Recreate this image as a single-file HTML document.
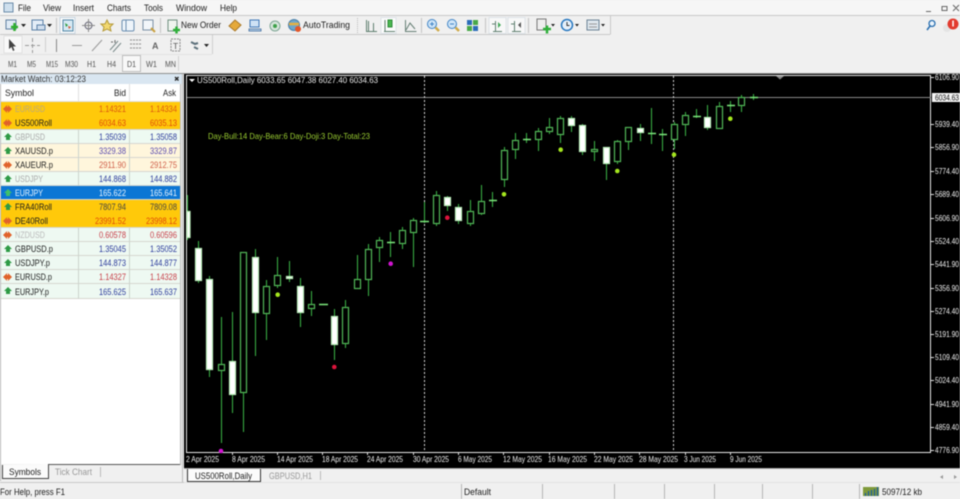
<!DOCTYPE html>
<html><head><meta charset="utf-8"><title>MT</title>
<style>
html,body{margin:0;padding:0;background:#f0f0f0;width:960px;height:499px;overflow:hidden}
svg{display:block;filter:blur(.4px)}
text{font-family:"Liberation Sans",sans-serif;font-size:9.6px;fill:#1c1c1c}
.g,g.g text{fill:#555;font-size:8.4px}
.r text{font-size:9.6px}
.ax text{fill:#f0f0f0;font-size:8.2px}
.h{fill:#fff;stroke:#b8ecb8;stroke-width:1.2}
.o{fill:#000;stroke:#52b858;stroke-width:1.2}
.ic{fill:none;stroke:#667;stroke-width:1}
</style></head><body>
<svg width="960" height="499" viewBox="0 0 960 499" xmlns="http://www.w3.org/2000/svg">
<rect width="960" height="499" fill="#f0f0f0"/>
<rect width="960" height="15" fill="#f6f6f6"/>
<path d="M0 15.5H960" stroke="#c8c8c8"/>
<!-- menu -->
<g>
<rect x="4" y="3" width="9" height="9" fill="#cfe0ee" stroke="#6a8aa8"/>
<text x="18" y="11" textLength="13" lengthAdjust="spacingAndGlyphs">File</text>
<text x="43" y="11" textLength="18" lengthAdjust="spacingAndGlyphs">View</text>
<text x="73" y="11" textLength="21" lengthAdjust="spacingAndGlyphs">Insert</text>
<text x="107" y="11" textLength="24" lengthAdjust="spacingAndGlyphs">Charts</text>
<text x="144" y="11" textLength="19" lengthAdjust="spacingAndGlyphs">Tools</text>
<text x="176" y="11" textLength="31" lengthAdjust="spacingAndGlyphs">Window</text>
<text x="220" y="11" textLength="17" lengthAdjust="spacingAndGlyphs">Help</text>
<path d="M926 11.500h5M942 6.500h5v4h-5zM953 5l6 6M959 5l-6 6" stroke="#666" fill="none"/>
</g>
<!-- toolbar 1 -->
<path d="M610.500 16V34.500M0 34.500H610" stroke="#c8c8c8" fill="none"/>
<path d="M56.500 18v15M160.500 18v15M421.500 18v15M485.500 18v15M528.500 18v15" stroke="#c4c4c4"/>
<rect x="6" y="20" width="10" height="9" fill="#dfeaf5" stroke="#5f7fa0"/><path d="M11 27h7M14.500 23v8" stroke="#2fae2f" stroke-width="2.500"/>
<path d="M21 24h5l-2.500 3z" fill="#222"/>
<rect x="32" y="20" width="11" height="10" fill="#e3edf7" stroke="#5a7fa6"/><path d="M37 25h8v5h-8z" fill="#cfdded" stroke="#5a7fa6"/>
<path d="M47 24h5l-2.500 3z" fill="#222"/>
<rect x="60" y="17.500" width="15" height="16" fill="#fbfbfb" stroke="#c6d4e0"/>
<rect x="63" y="20" width="10" height="11" fill="#d6e9f3" stroke="#4f86a6"/><path d="M65 23l3 2-2 2z" fill="#2a9a3a"/><path d="M68 26l3 1-2 2z" fill="#d5502a"/>
<circle cx="88.500" cy="25.500" r="3.500" class="ic"/><path d="M88.500 19v13M82 25.500h13" stroke="#8a8a8a"/>
<path d="M107 20l2 4 4 0-3 3 1 4-4-2-4 2 1-4-3-3 4 0z" fill="#f2d870" stroke="#b59a3a"/>
<rect x="122" y="20" width="12" height="11" rx="1.500" fill="#eef4fa" stroke="#6a8eb0"/><path d="M126 20v11" stroke="#6a8eb0"/>
<rect x="143" y="20" width="10" height="10" fill="#f2f6fa" stroke="#7a90a6"/><path d="M151 28l4 4" stroke="#c9a040" stroke-width="2"/>
<rect x="168" y="20" width="9" height="11" fill="#f0f5ef" stroke="#6f8f7f"/><path d="M173 30h7M176.500 26.500v7" stroke="#2faf3a" stroke-width="2.500"/>
<text x="181" y="28" textLength="40" lengthAdjust="spacingAndGlyphs">New Order</text>
<path d="M229 26l6-6 6 5-6 6z" fill="#e5a93a" stroke="#a8782a"/>
<rect x="250" y="20" width="9" height="7" fill="#cfe2f5" stroke="#3f78b8"/><path d="M249 29h12v2h-12z" fill="#bcd2ea" stroke="#5a82ad"/>
<circle cx="275" cy="26" r="5" fill="#d7e6dc" stroke="#7ea595"/><circle cx="275" cy="26" r="2" fill="#3da04a"/>
<circle cx="294" cy="25" r="5.500" fill="#6ea6cc" stroke="#4a7fa8"/><path d="M289 24h10" stroke="#e6b040" stroke-width="2.500"/><circle cx="298" cy="29" r="3" fill="#e2572a"/>
<text x="303" y="28" textLength="47" lengthAdjust="spacingAndGlyphs">AutoTrading</text>
<path d="M357.500 18v15" stroke="#bdbdbd" stroke-dasharray="1 1"/>
<path d="M366 31.500h11M368.500 21v10M373.500 23v8M366.500 31V20" stroke="#5f7f6f" fill="none"/>
<rect x="381" y="17.500" width="15" height="16" fill="#fbfbfb" stroke="#dde3e8"/>
<path d="M384 31.500h11M385 20v11" stroke="#5f7f6f"/><rect x="388" y="20" width="4" height="7" fill="#49b84f" stroke="#2f8a3a"/>
<path d="M405.500 20v11.500h11M406 30l4-7 5 6" stroke="#667f75" fill="none"/>
<circle cx="432" cy="24" r="4.500" fill="#cfe5f8" stroke="#3f83c5"/><path d="M430 24h4M432 22v4" stroke="#3f83c5"/><path d="M435.500 27.500l3.500 3.500" stroke="#cfaa4a" stroke-width="2.500"/>
<circle cx="452" cy="24" r="4.500" fill="#cfe5f8" stroke="#3f83c5"/><path d="M450 24h4" stroke="#3f83c5"/><path d="M455.500 27.500l3.500 3.500" stroke="#cfaa4a" stroke-width="2.500"/>
<rect x="467" y="20" width="5" height="5" fill="#2b6cb8"/><rect x="473" y="20" width="5" height="5" fill="#48a848"/><rect x="467" y="26" width="5" height="5" fill="#48a848"/><rect x="473" y="26" width="5" height="5" fill="#2b6cb8"/>
<path d="M492.500 18v15" stroke="#cfcfcf" stroke-width="2"/>
<rect x="489" y="17.500" width="17" height="16" fill="#f8f8f8" stroke="#dde3e8"/>
<rect x="508" y="17.500" width="17" height="16" fill="#f8f8f8" stroke="#dde3e8"/>
<path d="M493 31.500h9M495.500 21v10M492 24h3" stroke="#5f7f6f" fill="none"/><path d="M498 22l3 3-3 3z" fill="#45a95a"/>
<path d="M512 31.500h9M514.500 21v10M511 24h3" stroke="#5f7f6f" fill="none"/><path d="M521 22l-3 3 3 3z" fill="#555"/>
<rect x="537" y="19" width="9" height="11" fill="#eee" stroke="#777"/><path d="M543 29h8M547 25.500v8" stroke="#2faf3a" stroke-width="2.500"/>
<path d="M551 24h4l-2 2.500z" fill="#222"/>
<circle cx="567" cy="25" r="5.500" fill="#e6f0fa" stroke="#2878c0" stroke-width="1.500"/><path d="M567 22v3.500h2.500" stroke="#333" fill="none"/>
<path d="M575 24h4l-2 2.500z" fill="#222"/>
<rect x="587" y="20" width="12" height="10" fill="#dfe7ee" stroke="#6b8294"/><path d="M589 24h8M589 27h8" stroke="#999"/>
<path d="M601 24h4l-2 2.500z" fill="#222"/>
<!-- right icons -->
<circle cx="932" cy="23.500" r="3" fill="#eaf3fb" stroke="#2a6fb0" stroke-width="1.300"/><path d="M930 26l-3 4" stroke="#2a6fb0" stroke-width="1.600"/>
<circle cx="947" cy="28" r="4" fill="#e4e4e4"/>
<circle cx="953" cy="24" r="5.500" fill="#e23a2e"/><rect x="952.300" y="20.500" width="1.500" height="6" fill="#fff"/>
<!-- toolbar 2 -->
<path d="M212.500 35v19M45.500 37v15" stroke="#cfcfcf" fill="none"/>
<path d="M0 54.500H212" stroke="#e2e2e2"/>
<rect x="4" y="36" width="18" height="17" fill="#f9f9f9" stroke="#e0e0e0"/>
<path d="M9 39v10l2.500-2 1.500 4 1.500-.7-1.500-3.800h3z" fill="#444"/>
<path d="M32.500 38v15M25 45.500h15" stroke="#999" stroke-dasharray="4 2"/>
<path d="M56.500 39v13" stroke="#888"/><path d="M72 45.500h10" stroke="#999"/><path d="M92 51l10-11" stroke="#999"/>
<path d="M110 50l8-9M113 52l8-9" stroke="#7a8a8a"/><path d="M111 42h2M115 40v3" stroke="#666"/>
<path d="M130 40h11M130 44h11M130 48h11" stroke="#8b8b8b" stroke-dasharray="2 1"/>
<text x="152" y="49" font-weight="bold" style="font-size:9px;fill:#666">A</text>
<rect x="171" y="39" width="9" height="12" fill="none" stroke="#888" stroke-dasharray="2 1"/><text x="173" y="49" style="font-size:8.500px;fill:#555">T</text>
<path d="M191 42l4 2 3-1M194 47l4 2" stroke="#5b6f7a" stroke-width="2" fill="none"/><path d="M204 44h5l-2.500 3z" fill="#222"/>
<!-- toolbar 3 -->
<path d="M178.500 56v15" stroke="#d2d2d2" fill="none"/>
<rect x="122.500" y="55.500" width="18" height="16" fill="#f8f8f8" stroke="#bdbdbd"/>
<g class="g">
<text x="8" y="67" textLength="9" lengthAdjust="spacingAndGlyphs">M1</text>
<text x="27" y="67" textLength="9" lengthAdjust="spacingAndGlyphs">M5</text>
<text x="46" y="67" textLength="12" lengthAdjust="spacingAndGlyphs">M15</text>
<text x="65" y="67" textLength="13" lengthAdjust="spacingAndGlyphs">M30</text>
<text x="87" y="67" textLength="9" lengthAdjust="spacingAndGlyphs">H1</text>
<text x="107" y="67" textLength="9" lengthAdjust="spacingAndGlyphs">H4</text>
<text x="127" y="67" textLength="9" lengthAdjust="spacingAndGlyphs">D1</text>
<text x="146" y="67" textLength="11" lengthAdjust="spacingAndGlyphs">W1</text>
<text x="165" y="67" textLength="11" lengthAdjust="spacingAndGlyphs">MN</text>
</g>
<path d="M0 73.500H960" stroke="#8f8f8f"/>
<!-- market watch -->
<rect x="0" y="74" width="182" height="10" fill="#d9e6f1"/>
<text x="1" y="82" textLength="85" lengthAdjust="spacingAndGlyphs" style="font-size:9px;fill:#333">Market Watch: 03:12:23</text>
<path d="M175 77l3.500 3.500M178.500 77l-3.500 3.500" stroke="#222" stroke-width="1.300"/>
<rect x="1" y="84" width="179" height="380" fill="#fff"/>
<path d="M0.500 84v397M180.500 84v381M182.500 74v408" stroke="#bbb" fill="none"/>
<path d="M78.500 84v215M129.500 84v215M1 101.500H180" stroke="#e0e0e0"/>
<text x="5" y="96" textLength="29" lengthAdjust="spacingAndGlyphs">Symbol</text>
<text x="126" y="96" text-anchor="end" textLength="12" lengthAdjust="spacingAndGlyphs">Bid</text>
<text x="176" y="96" text-anchor="end" textLength="13" lengthAdjust="spacingAndGlyphs">Ask</text>
<!-- rows -->
<rect x="1" y="102" width="179" height="28" fill="#ffc90a"/>
<rect x="1" y="130" width="179" height="14" fill="#eefaf2"/>
<rect x="1" y="144" width="179" height="28" fill="#fff6dc"/>
<rect x="1" y="172" width="179" height="14" fill="#eefaf2"/>
<rect x="1" y="186" width="179" height="14" fill="#0b76d4"/>
<rect x="1" y="200" width="179" height="28" fill="#ffc90a"/>
<rect x="1" y="228" width="179" height="71" fill="#eef9f2"/>
<path d="M1 129.500H180M1 143.500H180M1 157.500H180M1 171.500H180M1 185.500H180M1 199.500H180M1 227.500H180M1 241.500H180M1 255.500H180M1 269.500H180M1 283.500H180M1 298.500H180" stroke="#d6d6d0"/>
<path d="M78.500 130v56M129.500 130v56M78.500 228v71M129.500 228v71" stroke="#ccd4cc"/>
<!-- arrows -->
<g fill="#e0622a">
<path d="M3 109l4-4v2h1v-2l4 4-4 4v-2h-1v2z"/><path d="M3 123l4-4v2h1v-2l4 4-4 4v-2h-1v2z"/><path d="M3 165l4-4v2h1v-2l4 4-4 4v-2h-1v2z"/><path d="M3 235l4-4v2h1v-2l4 4-4 4v-2h-1v2z"/><path d="M3 221l4-4v2h1v-2l4 4-4 4v-2h-1v2z"/><path d="M3 277l4-4v2h1v-2l4 4-4 4v-2h-1v2z"/>
</g>
<g fill="#2e9a45">
<path d="M8 133l4 4h-2v3h-4v-3h-2z"/><path d="M8 147l4 4h-2v3h-4v-3h-2z"/><path d="M8 175l4 4h-2v3h-4v-3h-2z"/><path d="M8 203l4 4h-2v3h-4v-3h-2z"/><path d="M8 245l4 4h-2v3h-4v-3h-2z"/><path d="M8 259l4 4h-2v3h-4v-3h-2z"/><path d="M8 287l4 4h-2v3h-4v-3h-2z"/>
</g>
<path d="M8 189l4 4h-2v3h-4v-3h-2z" fill="#3fc06a"/>
<!-- row text -->
<g class="r">
<text x="15" y="112" style="fill:#b9a880" textLength="30" lengthAdjust="spacingAndGlyphs">EURUSD</text>
<text x="126" y="112" text-anchor="end" style="fill:#dc5a10" textLength="27" lengthAdjust="spacingAndGlyphs">1.14321</text>
<text x="177" y="112" text-anchor="end" style="fill:#dc5a10" textLength="27" lengthAdjust="spacingAndGlyphs">1.14334</text>
<text x="15" y="126" textLength="37" lengthAdjust="spacingAndGlyphs">US500Roll</text>
<text x="126" y="126" text-anchor="end" style="fill:#e04a08" textLength="27" lengthAdjust="spacingAndGlyphs">6034.63</text>
<text x="177" y="126" text-anchor="end" style="fill:#e04a08" textLength="27" lengthAdjust="spacingAndGlyphs">6035.13</text>
<text x="15" y="140" style="fill:#aaa" textLength="30" lengthAdjust="spacingAndGlyphs">GBPUSD</text>
<text x="126" y="140" text-anchor="end" style="fill:#2d3c9c" textLength="27" lengthAdjust="spacingAndGlyphs">1.35039</text>
<text x="177" y="140" text-anchor="end" style="fill:#2d3c9c" textLength="27" lengthAdjust="spacingAndGlyphs">1.35058</text>
<text x="15" y="154" textLength="38" lengthAdjust="spacingAndGlyphs">XAUUSD.p</text>
<text x="126" y="154" text-anchor="end" style="fill:#5a4cb0" textLength="27" lengthAdjust="spacingAndGlyphs">3329.38</text>
<text x="177" y="154" text-anchor="end" style="fill:#5a4cb0" textLength="27" lengthAdjust="spacingAndGlyphs">3329.87</text>
<text x="15" y="168" textLength="38" lengthAdjust="spacingAndGlyphs">XAUEUR.p</text>
<text x="126" y="168" text-anchor="end" style="fill:#d0604a" textLength="27" lengthAdjust="spacingAndGlyphs">2911.90</text>
<text x="177" y="168" text-anchor="end" style="fill:#d0604a" textLength="27" lengthAdjust="spacingAndGlyphs">2912.75</text>
<text x="15" y="182" style="fill:#aaa" textLength="28" lengthAdjust="spacingAndGlyphs">USDJPY</text>
<text x="126" y="182" text-anchor="end" style="fill:#2d3c9c" textLength="27" lengthAdjust="spacingAndGlyphs">144.868</text>
<text x="177" y="182" text-anchor="end" style="fill:#2d3c9c" textLength="27" lengthAdjust="spacingAndGlyphs">144.882</text>
<text x="15" y="196" style="fill:#e8f4ff" textLength="28" lengthAdjust="spacingAndGlyphs">EURJPY</text>
<text x="126" y="196" text-anchor="end" style="fill:#e8f4ff" textLength="27" lengthAdjust="spacingAndGlyphs">165.622</text>
<text x="177" y="196" text-anchor="end" style="fill:#e8f4ff" textLength="27" lengthAdjust="spacingAndGlyphs">165.641</text>
<text x="15" y="210" textLength="37" lengthAdjust="spacingAndGlyphs">FRA40Roll</text>
<text x="126" y="210" text-anchor="end" style="fill:#444" textLength="27" lengthAdjust="spacingAndGlyphs">7807.94</text>
<text x="177" y="210" text-anchor="end" style="fill:#444" textLength="27" lengthAdjust="spacingAndGlyphs">7809.08</text>
<text x="15" y="224" textLength="33" lengthAdjust="spacingAndGlyphs">DE40Roll</text>
<text x="126" y="224" text-anchor="end" style="fill:#e04a08" textLength="31" lengthAdjust="spacingAndGlyphs">23991.52</text>
<text x="177" y="224" text-anchor="end" style="fill:#e04a08" textLength="31" lengthAdjust="spacingAndGlyphs">23998.12</text>
<text x="15" y="238" style="fill:#bbb" textLength="30" lengthAdjust="spacingAndGlyphs">NZDUSD</text>
<text x="126" y="238" text-anchor="end" style="fill:#c8404a" textLength="27" lengthAdjust="spacingAndGlyphs">0.60578</text>
<text x="177" y="238" text-anchor="end" style="fill:#c8404a" textLength="27" lengthAdjust="spacingAndGlyphs">0.60596</text>
<text x="15" y="252" textLength="38" lengthAdjust="spacingAndGlyphs">GBPUSD.p</text>
<text x="126" y="252" text-anchor="end" style="fill:#2d3c9c" textLength="27" lengthAdjust="spacingAndGlyphs">1.35045</text>
<text x="177" y="252" text-anchor="end" style="fill:#2d3c9c" textLength="27" lengthAdjust="spacingAndGlyphs">1.35052</text>
<text x="15" y="266" textLength="35" lengthAdjust="spacingAndGlyphs">USDJPY.p</text>
<text x="126" y="266" text-anchor="end" style="fill:#2d3c9c" textLength="27" lengthAdjust="spacingAndGlyphs">144.873</text>
<text x="177" y="266" text-anchor="end" style="fill:#2d3c9c" textLength="27" lengthAdjust="spacingAndGlyphs">144.877</text>
<text x="15" y="280" textLength="37" lengthAdjust="spacingAndGlyphs">EURUSD.p</text>
<text x="126" y="280" text-anchor="end" style="fill:#c8404a" textLength="27" lengthAdjust="spacingAndGlyphs">1.14327</text>
<text x="177" y="280" text-anchor="end" style="fill:#c8404a" textLength="27" lengthAdjust="spacingAndGlyphs">1.14328</text>
<text x="15" y="295" textLength="34" lengthAdjust="spacingAndGlyphs">EURJPY.p</text>
<text x="126" y="295" text-anchor="end" style="fill:#2d3c9c" textLength="27" lengthAdjust="spacingAndGlyphs">165.625</text>
<text x="177" y="295" text-anchor="end" style="fill:#2d3c9c" textLength="27" lengthAdjust="spacingAndGlyphs">165.637</text>
</g>
<!-- left tabs -->
<rect x="1" y="465" width="179" height="16" fill="#f0f0f0"/>
<path d="M48 464.500H180" stroke="#555"/>
<path d="M2.500 465v13.500H48.500V464" stroke="#444" fill="#fbfbfb"/>
<text x="9" y="475" textLength="32" lengthAdjust="spacingAndGlyphs">Symbols</text>
<text x="55" y="475" textLength="37" lengthAdjust="spacingAndGlyphs" style="fill:#999">Tick Chart</text>
<path d="M100.500 467v10" stroke="#bbb"/>
<path d="M0 482.500H184" stroke="#c8c8c8"/>
<!-- chart -->
<rect x="184" y="74" width="776" height="395" fill="#000"/>
<path d="M186.500 75.500H930.500V452.500H186.500Z" fill="none" stroke="#e8e8e8"/>
<path d="M187 97.500H931" stroke="#8a8a8a"/>
<path d="M424.500 76V452M673.500 76V452" stroke="#d8d8d8" stroke-dasharray="2 2"/>
<path d="M189 79h6l-3 3z" fill="#fff"/>
<path d="M776 76h8l-4 3.500z" fill="#888"/>
<text x="197" y="83" textLength="181" lengthAdjust="spacingAndGlyphs" style="fill:#e8e8e8;font-size:8.200px">US500Roll,Daily  6033.65 6047.38 6027.40 6034.63</text>
<text x="208" y="139" textLength="162" lengthAdjust="spacingAndGlyphs" style="fill:#9acd32;font-size:8.400px">Day-Bull:14 Day-Bear:6 Day-Doji:3 Day-Total:23</text>
<!-- wicks -->
<path stroke="#38a842" stroke-width="1.100" fill="none" d="M187.500 195V240M198.500 241V283M209.500 276V377M221.500 317V443M232.500 312V413M243.500 252V432M255.500 249V356M266.500 280V340M277.500 257V288M289.500 261V282M300.500 278V327M311.500 291V316M334.500 309V360M345.500 300V348M357.500 255V289M368.500 244V296M379.500 237V262M390.500 232V257M402.500 227V249M413.500 218V267M424.500 202V223M436.500 191V226M447.500 196V211M458.500 204V224M470.500 200V226M481.500 185V215M492.500 192V207M504.500 147V187M515.500 133V159M526.500 133V143M538.500 128V151M549.500 118V134M560.500 116V143M571.500 116V132M582.500 124V155M594.500 141V161M606.500 147V180M617.500 140V164M628.500 127V150M640.500 124V141M651.500 108V144M662.500 129V151M674.500 122V149M685.500 112V136M696.500 109V118M707.500 105V130M719.500 102V129M730.500 101V112M741.500 95V112M753.500 94V100"/>
<!-- doji -->
<path stroke="#7ce87c" stroke-width="1.500" fill="none" d="M319 304.500h9M387 242.500h8M420 221.500h9M489 200.500h8M523 139.500h8M648 133.500h8M659 134.500h8M693 116.500h8M727 105.500h8M750 97.500h8"/>
<!-- white bodies -->
<g class="h">
<rect x="187" y="211.500" width="3" height="26"/>
<rect x="195.500" y="248.500" width="6" height="32"/>
<rect x="206.500" y="279.500" width="6" height="90"/>
<rect x="229.500" y="361.500" width="6" height="33"/>
<rect x="252.500" y="257.500" width="6" height="55"/>
<rect x="286.500" y="276.500" width="6" height="2"/>
<rect x="297.500" y="286.500" width="6" height="26"/>
<rect x="331.500" y="316.500" width="6" height="28"/>
<rect x="444.500" y="197.500" width="6" height="8"/>
<rect x="455.500" y="207.500" width="6" height="13"/>
<rect x="568.500" y="118.500" width="6" height="7"/>
<rect x="579.500" y="125.500" width="6" height="26"/>
<rect x="603.500" y="147.500" width="6" height="16"/>
<rect x="637.500" y="128.500" width="6" height="4"/>
<rect x="704.500" y="117.500" width="6" height="10"/>
</g>
<!-- hollow bodies -->
<g class="o">
<rect x="218.500" y="364.500" width="6" height="6"/>
<rect x="240.500" y="252.500" width="6" height="140"/>
<rect x="263.500" y="286.500" width="6" height="27"/>
<rect x="274.500" y="275.500" width="6" height="10"/>
<rect x="308.500" y="304.500" width="6" height="4"/>
<rect x="342.500" y="307.500" width="6" height="36"/>
<rect x="354.500" y="279.500" width="6" height="9"/>
<rect x="365.500" y="249.500" width="6" height="30"/>
<rect x="376.500" y="240.500" width="6" height="7"/>
<rect x="399.500" y="230.500" width="6" height="13"/>
<rect x="410.500" y="220.500" width="6" height="12"/>
<rect x="433.500" y="195.500" width="6" height="28"/>
<rect x="467.500" y="211.500" width="6" height="12"/>
<rect x="478.500" y="201.500" width="6" height="12"/>
<rect x="501.500" y="150.500" width="6" height="29"/>
<rect x="512.500" y="140.500" width="6" height="9"/>
<rect x="535.500" y="131.500" width="6" height="8"/>
<rect x="546.500" y="127.500" width="6" height="4"/>
<rect x="557.500" y="118.500" width="6" height="16"/>
<rect x="591.500" y="149.500" width="6" height="2"/>
<rect x="614.500" y="141.500" width="6" height="20"/>
<rect x="625.500" y="127.500" width="6" height="14"/>
<rect x="671.500" y="124.500" width="6" height="15"/>
<rect x="682.500" y="115.500" width="6" height="9"/>
<rect x="716.500" y="106.500" width="6" height="22"/>
<rect x="738.500" y="97.500" width="6" height="8"/>
</g>
<!-- dots -->
<g fill="#a4e61e">
<circle cx="277.700" cy="294.700" r="2.300"/><circle cx="504" cy="194.300" r="2.300"/><circle cx="560.700" cy="149.700" r="2.300"/><circle cx="617.300" cy="171" r="2.300"/><circle cx="674" cy="154.700" r="2.300"/><circle cx="730.300" cy="118.700" r="2.300"/>
</g>
<g fill="#dc143c"><circle cx="334.300" cy="367" r="2.300"/><circle cx="447.300" cy="217.700" r="2.300"/></g>
<g fill="#d014d0"><circle cx="221" cy="451" r="2.300"/><circle cx="390.700" cy="263.700" r="2.300"/></g>
<!-- price axis -->
<path d="M931 77.500h3M931 124.500h3M931 147.500h3M931 171.500h3M931 194.500h3M931 218.500h3M931 241.500h3M931 264.500h3M931 288.500h3M931 311.500h3M931 334.500h3M931 357.500h3M931 380.500h3M931 404.500h3M931 427.500h3M931 450.500h3" stroke="#ddd"/>
<g class="ax">
<text x="935" y="80" textLength="24" lengthAdjust="spacingAndGlyphs">6106.90</text>
<text x="935" y="127" textLength="24" lengthAdjust="spacingAndGlyphs">5939.40</text>
<text x="935" y="150" textLength="24" lengthAdjust="spacingAndGlyphs">5856.90</text>
<text x="935" y="174" textLength="24" lengthAdjust="spacingAndGlyphs">5774.40</text>
<text x="935" y="197" textLength="24" lengthAdjust="spacingAndGlyphs">5689.40</text>
<text x="935" y="221" textLength="24" lengthAdjust="spacingAndGlyphs">5606.90</text>
<text x="935" y="244" textLength="24" lengthAdjust="spacingAndGlyphs">5524.40</text>
<text x="935" y="267" textLength="24" lengthAdjust="spacingAndGlyphs">5441.90</text>
<text x="935" y="291" textLength="24" lengthAdjust="spacingAndGlyphs">5356.90</text>
<text x="935" y="314" textLength="24" lengthAdjust="spacingAndGlyphs">5274.40</text>
<text x="935" y="337" textLength="24" lengthAdjust="spacingAndGlyphs">5191.90</text>
<text x="935" y="360" textLength="24" lengthAdjust="spacingAndGlyphs">5109.40</text>
<text x="935" y="383" textLength="24" lengthAdjust="spacingAndGlyphs">5024.40</text>
<text x="935" y="407" textLength="24" lengthAdjust="spacingAndGlyphs">4941.90</text>
<text x="935" y="430" textLength="24" lengthAdjust="spacingAndGlyphs">4859.40</text>
<text x="935" y="453" textLength="24" lengthAdjust="spacingAndGlyphs">4776.90</text>
</g>
<rect x="932" y="93" width="28" height="9" fill="#f4f4f4"/>
<text x="935" y="100.500" textLength="24" lengthAdjust="spacingAndGlyphs" style="font-size:8.200px;fill:#111">6034.63</text>
<!-- date axis -->
<path d="M232.500 453v2M277.500 453v2M322.500 453v2M367.500 453v2M413.500 453v2M458.500 453v2M503.500 453v2M549.500 453v2M594.500 453v2M639.500 453v2M685.500 453v2M730.500 453v2" stroke="#ddd"/>
<g class="ax">
<text x="186" y="462" textLength="33" lengthAdjust="spacingAndGlyphs">2 Apr 2025</text>
<text x="232" y="462" textLength="33" lengthAdjust="spacingAndGlyphs">8 Apr 2025</text>
<text x="277" y="462" textLength="36" lengthAdjust="spacingAndGlyphs">14 Apr 2025</text>
<text x="322" y="462" textLength="36" lengthAdjust="spacingAndGlyphs">18 Apr 2025</text>
<text x="367" y="462" textLength="36" lengthAdjust="spacingAndGlyphs">24 Apr 2025</text>
<text x="413" y="462" textLength="36" lengthAdjust="spacingAndGlyphs">30 Apr 2025</text>
<text x="458" y="462" textLength="34" lengthAdjust="spacingAndGlyphs">6 May 2025</text>
<text x="503" y="462" textLength="39" lengthAdjust="spacingAndGlyphs">12 May 2025</text>
<text x="548" y="462" textLength="39" lengthAdjust="spacingAndGlyphs">16 May 2025</text>
<text x="594" y="462" textLength="39" lengthAdjust="spacingAndGlyphs">22 May 2025</text>
<text x="639" y="462" textLength="39" lengthAdjust="spacingAndGlyphs">28 May 2025</text>
<text x="684" y="462" textLength="32" lengthAdjust="spacingAndGlyphs">3 Jun 2025</text>
<text x="730" y="462" textLength="32" lengthAdjust="spacingAndGlyphs">9 Jun 2025</text>
</g>
<!-- chart tabs -->
<rect x="184" y="468" width="776" height="15" fill="#f0f0f0"/>
<path d="M184 468.500H960" stroke="#a8a8a8"/>
<path d="M187.500 469v12.500H260.500V469" stroke="#333" fill="#fbfbfb"/>
<text x="195" y="479" textLength="57" lengthAdjust="spacingAndGlyphs">US500Roll,Daily</text>
<text x="269" y="479" textLength="43" lengthAdjust="spacingAndGlyphs" style="fill:#999">GBPUSD,H1</text>
<path d="M320.500 471v9" stroke="#bbb"/>
<path d="M943 475l-3 2 3 2zM954 475l3 2-3 2z" fill="#999"/>
<path d="M184 482.500H960" stroke="#e2e2e2"/>
<!-- status bar -->
<text x="0" y="495" textLength="65" lengthAdjust="spacingAndGlyphs">For Help, press F1</text>
<path d="M461.500 484v15M542.500 484v15M614.500 484v15M664.500 484v15M714.500 484v15M762.500 484v15M812.500 484v15M859.500 484v15" stroke="#b5b5b5"/>
<text x="464" y="495" textLength="27" lengthAdjust="spacingAndGlyphs">Default</text>
<rect x="863" y="487" width="16" height="9" fill="#7f9a3a"/>
<path d="M865.500 496v-3M868.500 496v-5M871.500 496v-6M874.500 496v-7M877.500 496v-9" stroke="#1e5f9e" stroke-width="1.300"/>
<text x="882" y="495" textLength="40" lengthAdjust="spacingAndGlyphs">5097/12 kb</text>
</svg>
</body></html>
